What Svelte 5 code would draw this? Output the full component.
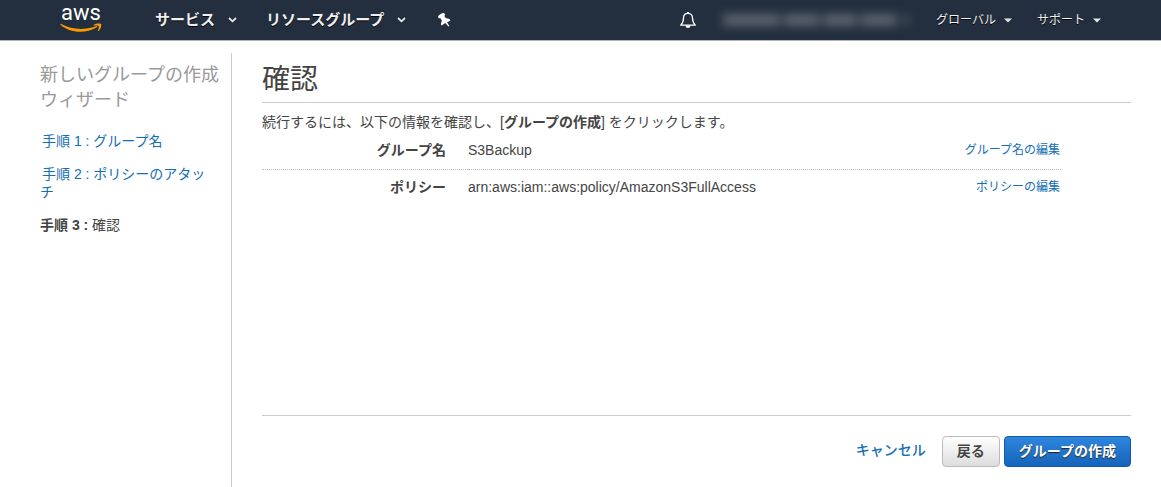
<script>
  const menus = ['サービス', 'リソースグループ'];
  const accountMenus = ['グローバル', 'サポート'];
  const rows = [
    { label: 'グループ名', value: 'S3Backup', edit: 'グループ名の編集' },
    { label: 'ポリシー', value: 'arn:aws:iam::aws:policy/AmazonS3FullAccess', edit: 'ポリシーの編集' }
  ];
</script>

<div class="page" lang="ja">
  <header class="nav">
    <a class="logo" href="#home">
      <span class="logo-text">aws</span>
      <svg class="smile" viewBox="0 0 42 11" width="42" height="11" aria-hidden="true">
        <path d="M.5 1.800C0 1.200.6.600 1.300 1 12.500 7 24 7.200 36 3.200c1-.4 1.700.5.8 1.100C26 10.800 10 10.600.5 1.800z" fill="#f90" />
        <path d="M33.800 1.800c2.200-1.600 6.700-1.700 7.300-.9.6.9-.3 5.300-2.500 7-.5.4-.9.1-.7-.4.700-1.700 1.300-3.800.8-4.500-.5-.6-3-.5-4.600-.3-.500 0-.7-.5-.3-.9z" fill="#f90" />
      </svg>
    </a>
    <nav class="main-menu">
      {#each menus as item}
        <button class="menu" type="button">
          {item}
          <svg viewBox="0 0 9 6" width="9" height="6" aria-hidden="true"><path d="M1 1l3.500 3.300L8 1" fill="none" stroke="#e6e6e6" stroke-width="1.800" /></svg>
        </button>
      {/each}
    </nav>
    <button class="icon pin" type="button" aria-label="ピン">
      <svg viewBox="0 0 14 16" width="14" height="16" aria-hidden="true">
        <path d="M1 4.800C1.800 2.800 4.300 1 7 1l1.200 1.700-.9 1.400 1.800 2.300c1.800-.2 3.600.6 4.400 2.300L10 10.300l2.300 3.700-.9.400-3-3.300-3.900 2.500c-.9-1.600-.6-3.500.5-4.700L3.500 6.200 1.800 6.300z" fill="#fff" />
      </svg>
    </button>
    <div class="account">
      <button class="icon" type="button" aria-label="通知">
        <svg viewBox="0 0 18 18" width="18" height="18" aria-hidden="true">
          <path d="M9 2.300c-3 0-4.500 2.200-4.500 4.700 0 3.700-.8 5.200-2.800 7.200h14.600c-2-2-2.800-3.500-2.800-7.200 0-2.500-1.500-4.700-4.500-4.700z" fill="none" stroke="#fff" stroke-width="1.300" stroke-linejoin="round" />
          <path d="M8 1h2v1.500H8zM6.500 14.500h5c-.2 1.700-1.200 2.500-2.500 2.500s-2.300-.8-2.500-2.500z" fill="#fff" />
        </svg>
      </button>
      <div class="masked" aria-hidden="true"><i></i><i></i><i></i><i></i><i></i></div>
      {#each accountMenus as item}
        <button class="menu small" type="button">
          {item}
          <svg viewBox="0 0 8 5" width="8" height="5" aria-hidden="true"><path d="M0 .5h8L4 4.500z" fill="#e6e6e6" /></svg>
        </button>
      {/each}
    </div>
  </header>

  <div class="body">
    <aside>
      <h2>新しいグループの作成ウィザード</h2>
      <ol>
        <li><a href="#step1">手順 1 : グループ名</a></li>
        <li><a href="#step2">手順 2 : ポリシーのアタッチ</a></li>
        <li aria-current="step"><b>手順 3 :</b> 確認</li>
      </ol>
    </aside>

    <main>
      <h1>確認</h1>
      <p>続行するには、以下の情報を確認し、[<b>グループの作成</b>] をクリックします。</p>
      <table>
        <tbody>
          {#each rows as row}
            <tr>
              <th scope="row">{row.label}</th>
              <td>{row.value}</td>
              <td class="edit"><a href="#edit">{row.edit}</a></td>
            </tr>
          {/each}
        </tbody>
      </table>
      <footer>
        <a href="#cancel">キャンセル</a>
        <button class="btn" type="button">戻る</button>
        <button class="btn primary" type="button">グループの作成</button>
      </footer>
    </main>
  </div>
</div>

<style>
  :global(body) {
    margin: 0;
    background: #fff;
  }
  .page {
    display: flex;
    flex-direction: column;
    min-height: 100vh;
    color: #444;
    font: 14px/18px "Liberation Sans", "Noto Sans CJK JP", sans-serif;
  }
  button {
    font: inherit;
    cursor: pointer;
  }
  a {
    color: #146eb4;
    text-decoration: none;
  }
  .nav {
    display: flex;
    align-items: center;
    height: 40px;
    padding: 0 60px;
    background: #232f3e;
    border-bottom: 1px solid #b4b4b4;
  }
  .logo {
    display: flex;
    flex-direction: column;
    align-items: center;
    width: 42px;
    margin-right: 53px;
  }
  .logo-text {
    color: #fff;
    font: 22px/16px Roboto, sans-serif;
  }
  .smile {
    margin: 2px 0 1px;
  }
  .main-menu {
    display: flex;
    gap: 29px;
  }
  .menu {
    display: flex;
    align-items: center;
    gap: 13px;
    padding: 0;
    border: 0;
    background: none;
    color: #f0f0f0;
    font-size: 15px;
    font-weight: bold;
    text-shadow: 0 1px 0 #000;
    white-space: nowrap;
  }
  .menu.small {
    gap: 8px;
    margin-left: 25px;
    font-size: 12px;
    font-weight: normal;
  }
  .icon {
    display: flex;
    padding: 0;
    border: 0;
    background: none;
  }
  .pin {
    margin-left: 31px;
  }
  .account {
    display: flex;
    align-items: center;
    margin-left: auto;
  }
  .masked {
    display: flex;
    gap: 4px;
    width: 188px;
    margin-left: 26px;
    filter: blur(5px);
  }
  .masked i {
    flex: 3;
    height: 12px;
    background: #5a626c;
  }
  .masked i:first-child {
    flex: 5;
  }
  .masked i:last-child {
    flex: 1;
    opacity: 0.4;
  }
  .body {
    display: flex;
    flex: 1;
    padding-right: 30px;
  }
  aside {
    box-sizing: border-box;
    flex: none;
    width: 192px;
    margin: 12px 0 0 40px;
    padding-top: 10px;
    border-right: 1px solid #ccc;
  }
  h2 {
    margin: 0 0 19px;
    color: #999;
    font-size: 18px;
    font-weight: normal;
    line-height: 25px;
  }
  ol {
    display: grid;
    gap: 15px;
    margin: 0;
    padding: 0 16px 0 0;
    list-style: none;
  }
  li a {
    display: block;
    text-indent: 2px;
  }
  main {
    display: flex;
    flex: 1;
    flex-direction: column;
    min-width: 0;
    padding: 23px 0 20px 30px;
  }
  h1 {
    margin: 0 0 10px;
    padding-bottom: 6px;
    border-bottom: 1px solid #ccc;
    font-size: 28px;
    font-weight: normal;
    line-height: 32px;
  }
  p {
    margin: 0 0 2px;
  }
  table {
    margin-right: 70px;
    border-collapse: collapse;
  }
  th,
  td {
    padding: 8px 0 10px;
    text-align: left;
    vertical-align: top;
  }
  th {
    width: 184px;
    padding-right: 22px;
    text-align: right;
  }
  tr + tr {
    border-top: 1px dotted #bbb;
  }
  .edit {
    padding-right: 1px;
    font-size: 12px;
    text-align: right;
  }
  footer {
    display: flex;
    align-items: center;
    justify-content: flex-end;
    gap: 4px;
    margin-top: auto;
    padding-top: 20px;
    border-top: 1px solid #ccc;
  }
  footer a {
    margin-right: 12px;
    padding-bottom: 4px;
    font-weight: 500;
  }
  .btn {
    height: 31px;
    padding: 0 14px 2px;
    border: 1px solid #bbb;
    border-radius: 4px;
    background: linear-gradient(#fff, #ddd);
    color: #444;
    font-weight: bold;
  }
  .primary {
    border-color: #1158a8;
    background: linear-gradient(#2f86dd, #1464ba);
    color: #fff;
    text-shadow: 0 1px 1px #222;
  }
</style>
